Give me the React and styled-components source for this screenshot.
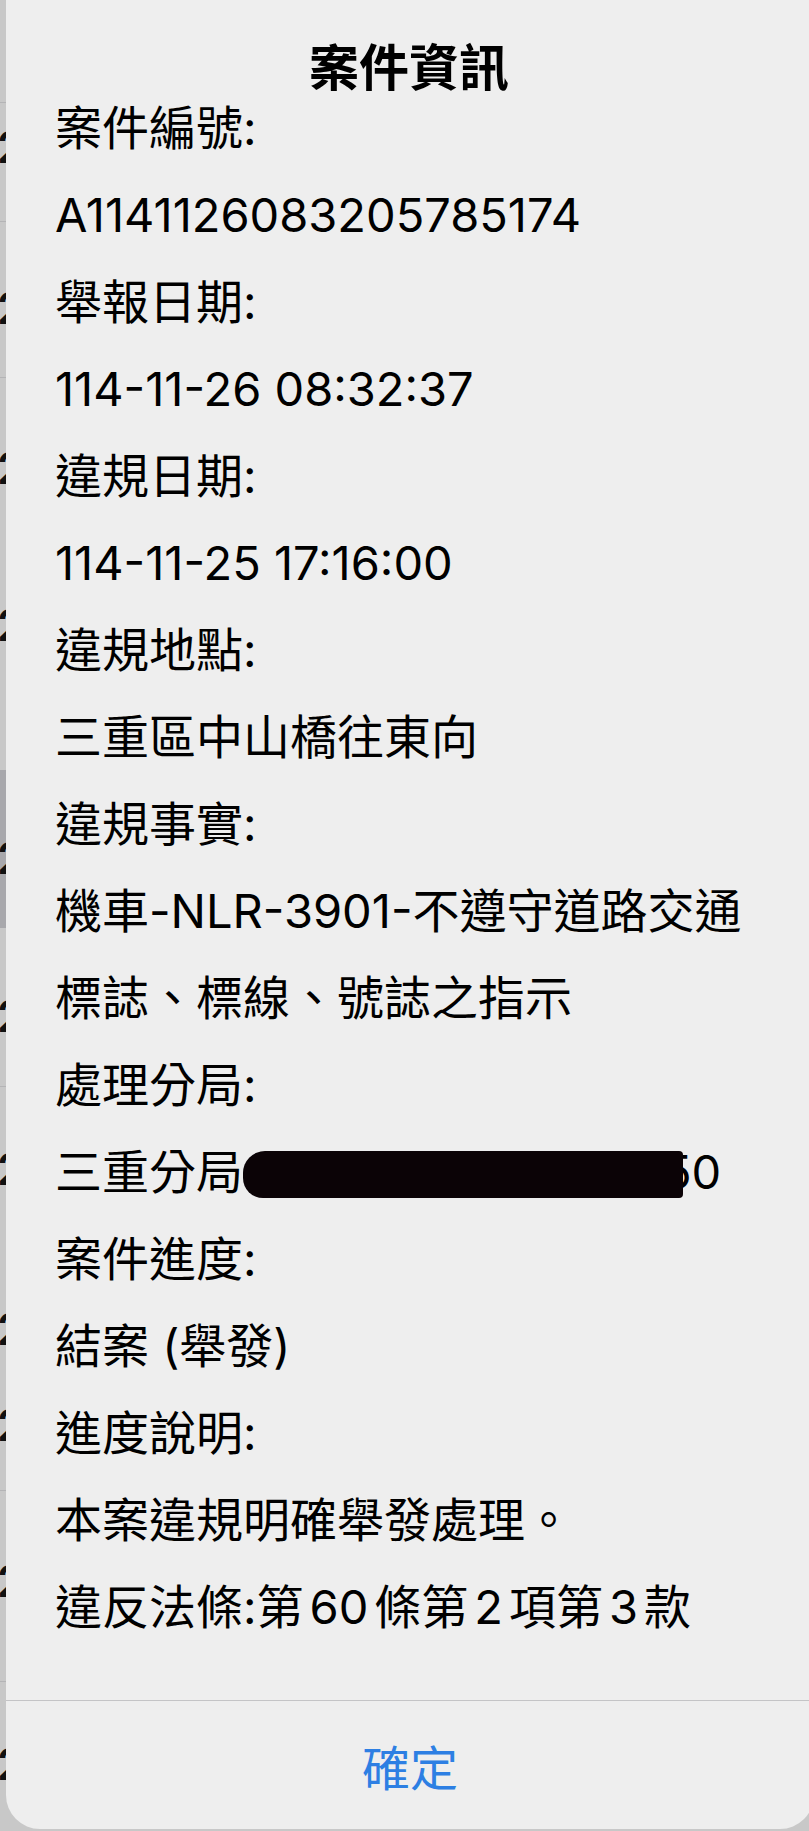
import React from 'react';
import styled, { createGlobalStyle } from 'styled-components';

const GlobalStyle = createGlobalStyle`
  html, body {
    margin: 0;
    padding: 0;
    background: #c8c8c8;
    overflow: hidden;
  }
  body {
    font-family: "Inter", "Noto Sans CJK TC", "Noto Sans", sans-serif;
    -webkit-font-smoothing: antialiased;
  }
`;

const Page = styled.div`
  display: flex;
  width: 809px;
  height: 1831px;
  overflow: hidden;
  background: #c8c8c8;
`;

// the list that peeks out from under the sheet on the left
const Backdrop = styled.div`
  flex: 0 0 6px;
  display: flex;
  flex-direction: column;
  overflow: hidden;
`;

const BackRow = styled.div`
  flex: 0 0 ${p => p.$h}px;
  box-sizing: border-box;
  padding-top: ${p => p.$markTop}px;
  background: ${p => (p.$dark ? '#a8a8ac' : '#c8c8c8')};
  border-bottom: 1px solid ${p => (p.$line ? '#b4b4b6' : 'transparent')};
  overflow: hidden;
`;

const BackMark = styled.span`
  display: block;
  margin-left: -3px;
  font-family: "Inter", sans-serif;
  font-weight: 600;
  font-size: 44px;
  line-height: 44px;
  color: #111;
`;

const Sheet = styled.div`
  flex: 0 0 808px;
  height: 1829px;
  display: flex;
  flex-direction: column;
  background: #eeeeee;
  border-radius: 0 0 34px 34px;
`;

const Title = styled.h1`
  margin: 0;
  padding-top: 46px;
  text-align: center;
  font-size: 50px;
  line-height: 44px;
  font-weight: 600;
  color: #000;
  padding-right: 2px;
`;

const Body = styled.div`
  margin-top: -6px;
  padding: 0 48px 0 49px;
  font-size: 47px;
  line-height: 87px;
  color: #000;
  flex: 1;
`;

const Line = styled.div`
  white-space: normal;
`;

const Num = styled.span`
  margin: 0 6px;
`;

const Redaction = styled.span`
  display: inline-block;
  position: relative;
  z-index: 1;
  width: 440px;
  height: 47px;
  margin-right: -20px;
  vertical-align: -9px;
  background: #0b0306;
  border-radius: 22px 4px 4px 20px;
`;

const Divider = styled.div`
  height: 1px;
  background: #c4c4c6;
`;

const Action = styled.button`
  height: 128px;
  border: 0;
  background: transparent;
  font-family: "Noto Sans CJK TC", sans-serif;
  font-size: 48px;
  color: #2d7fe3;
  padding: 0;
  cursor: pointer;
`;

const backRows = [
  { h: 103, markTop: 0, mark: false, line: true },
  { h: 119, markTop: 22, mark: true, line: true },
  { h: 156, markTop: 64, mark: true, line: true },
  { h: 159, markTop: 68, mark: true, line: false },
  { h: 158, markTop: 66, mark: true, line: false },
  { h: 75, markTop: 0, mark: false, line: false },
  { h: 158, markTop: 66, mark: true, dark: true },
  { h: 159, markTop: 66, mark: true, line: true },
  { h: 158, markTop: 60, mark: true, line: false },
  { h: 158, markTop: 62, mark: true, line: false },
  { h: 88, markTop: 0, mark: true, line: true },
  { h: 191, markTop: 68, mark: true, line: true },
  { h: 149, markTop: 60, mark: true, line: false },
];

const lines = [
  '案件編號:',
  'A1141126083205785174',
  '舉報日期:',
  '114-11-26 08:32:37',
  '違規日期:',
  '114-11-25 17:16:00',
  '違規地點:',
  '三重區中山橋往東向',
  '違規事實:',
  '機車-NLR-3901-不遵守道路交通標誌、標線、號誌之指示',
  '處理分局:',
  'station',
  '案件進度:',
  '結案 (舉發)',
  '進度說明:',
  '本案違規明確舉發處理。',
  'law',
];

function renderLine(text) {
  if (text === 'station') {
    return (
      <>
        三重分局<Redaction />50
      </>
    );
  }
  if (text === 'law') {
    return (
      <>
        違反法條:第<Num>60</Num>條第<Num>2</Num>項第<Num>3</Num>款
      </>
    );
  }
  return text;
}

export default function App() {
  return (
    <>
      <GlobalStyle />
      <Page>
        <Backdrop>
          {backRows.map((r, i) => (
            <BackRow key={i} $h={r.h} $markTop={r.markTop} $dark={r.dark} $line={r.line}>
              {r.mark && <BackMark>2</BackMark>}
            </BackRow>
          ))}
        </Backdrop>
        <Sheet>
          <Title>案件資訊</Title>
          <Body>
            {lines.map((text, i) => (
              <Line key={i}>{renderLine(text)}</Line>
            ))}
          </Body>
          <Divider />
          <Action>確定</Action>
        </Sheet>
      </Page>
    </>
  );
}
